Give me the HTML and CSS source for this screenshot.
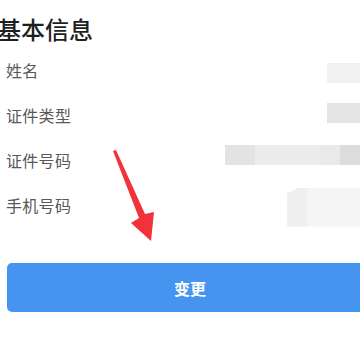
FILE: index.html
```html
<!DOCTYPE html>
<html lang="zh">
<head>
<meta charset="utf-8">
<link rel="stylesheet" href="styles.css">
</head>
<body>
<div class="page">
  <h1 class="title">基本信息</h1>
  <div class="rows">
    <div class="row"><span class="label">姓名</span><span class="val v1"></span></div>
    <div class="row"><span class="label">证件类型</span><span class="val v2"></span></div>
    <div class="row"><span class="label">证件号码</span><span class="val v3"></span></div>
    <div class="row"><span class="label">手机号码</span><span class="val v4"></span></div>
  </div>
  <button class="btn">变更</button>
  <svg class="arrow" width="360" height="360" viewBox="0 0 360 360">
    <polygon points="113,151 116,150 145,214 154,212 151,241 131,223 139,218" fill="#f2323a"/>
  </svg>
</div>
</body>
</html>
```
FILE: styles.css
```css
html, body {
  margin: 0;
  padding: 0;
  background: #ffffff;
  overflow: hidden;
}
body {
  width: 360px;
  height: 360px;
  font-family: "Noto Sans CJK SC", "Noto Sans", sans-serif;
}
.page {
  position: relative;
  width: 360px;
  height: 360px;
  overflow: hidden;
}
.title {
  margin: 14px 0 0 -3px;
  height: 30px;
  line-height: 30px;
  font-size: 24px;
  font-weight: 500;
  color: #1f1f1f;
}
.rows {
  margin-top: 3.5px;
  display: flex;
  flex-direction: column;
}
.row {
  height: 45px;
  display: flex;
  align-items: center;
  padding-left: 6px;
}
.label {
  font-size: 16px;
  color: #585858;
  letter-spacing: 0.3px;
}
.val {
  margin-left: auto;
  display: block;
}
.v1 {
  width: 33px;
  height: 20px;
  margin-top: 6px;
  background: #f1f1f1;
}
.v2 {
  width: 33px;
  height: 20px;
  margin-bottom: 4px;
  background: #e4e4e4;
}
.v3 {
  width: 135px;
  height: 20px;
  margin-bottom: 10px;
  background: linear-gradient(90deg, #e3e3e3 0, #e3e3e3 30px, #ececec 30px, #ececec 95px, #e9e9e9 95px, #e9e9e9 115px, #dcdcdc 115px);
}
.v4 {
  width: 73px;
  height: 39px;
  margin-top: 4px;
  background: linear-gradient(90deg, #efefef 0, #efefef 20px, #f5f5f5 20px);
  clip-path: polygon(0 6px, 12px 0, 100% 0, 100% 100%, 0 100%);
}
.btn {
  display: block;
  margin: 35.5px 0 0 7px;
  width: 366px;
  height: 49px;
  border: none;
  border-radius: 5px;
  background: #4594f0;
  color: #ffffff;
  font-family: "Noto Sans CJK SC", sans-serif;
  font-size: 16px;
  font-weight: 700;
  padding: 0;
}
.arrow {
  position: absolute;
  left: 0;
  top: 0;
  pointer-events: none;
}
```
